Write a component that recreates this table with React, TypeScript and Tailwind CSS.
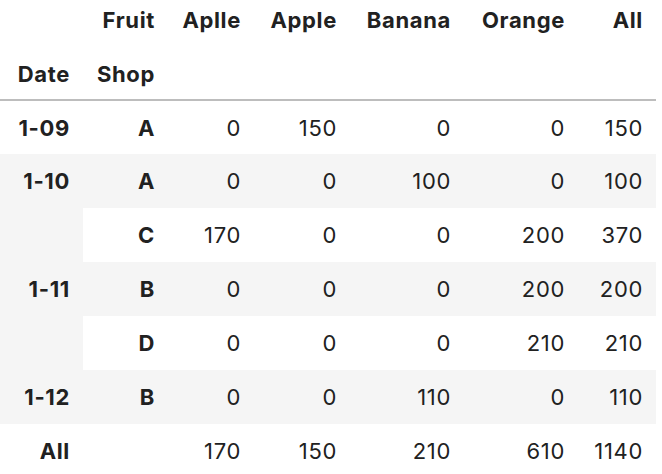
const cols = ["Aplle", "Apple", "Banana", "Orange", "All"];

type Row = { date?: string; span?: number; shop: string; vals: number[]; grey: boolean };

const rows: Row[] = [
  { date: "1-09", shop: "A", vals: [0, 150, 0, 0, 150], grey: false },
  { date: "1-10", shop: "A", vals: [0, 0, 100, 0, 100], grey: true },
  { date: "1-11", span: 3, shop: "C", vals: [170, 0, 0, 200, 370], grey: false },
  { shop: "B", vals: [0, 0, 0, 200, 200], grey: true },
  { shop: "D", vals: [0, 0, 0, 210, 210], grey: false },
  { date: "1-12", shop: "B", vals: [0, 0, 110, 0, 110], grey: true },
  { date: "All", shop: "", vals: [170, 150, 210, 610, 1140], grey: false },
];

const th = "pr-[13px] text-right align-middle font-bold";
const td = "pr-[13px] text-right align-middle font-normal";

export default function App() {
  return (
    <div className="h-[474px] w-[662px] overflow-hidden bg-white font-['Inter',sans-serif] text-[22px] leading-[26px] tracking-[0.03em] text-[#212121]">
      <table className="w-[656px] table-fixed border-collapse">
        <colgroup>
          <col className="w-[83px]" />
          <col className="w-[85px]" />
          <col className="w-[86px]" />
          <col className="w-[96px]" />
          <col className="w-[114px]" />
          <col className="w-[114px]" />
          <col className="w-[78px]" />
        </colgroup>
        <thead>
          <tr className="h-[46px]">
            <th className={`${th} !align-top pt-[7px]`}></th>
            <th className={`${th} !align-top pt-[7px]`}>Fruit</th>
            {cols.map((c) => (
              <th key={c} className={`${th} !align-top pt-[7px]`}>{c}</th>
            ))}
          </tr>
          <tr className="h-[54px] border-b-2 border-[#bdbdbd]">
            <th className={`${th} !align-top pt-[15px]`}>Date</th>
            <th className={`${th} !align-top pt-[15px]`}>Shop</th>
            {cols.map((c) => (
              <th key={c} className={th}></th>
            ))}
          </tr>
        </thead>
        <tbody>
          {rows.map((r, i) => (
            <tr key={i} className={`h-[54px] ${r.grey ? "bg-[#f5f5f5]" : "bg-white"}`}>
              {r.date && (
                <th rowSpan={r.span ?? 1} className={`${th} ${r.span ? "bg-[#f5f5f5]" : ""}`}>
                  {r.date}
                </th>
              )}
              <th className={th}>{r.shop}</th>
              {r.vals.map((v, j) => (
                <td key={j} className={td}>{v}</td>
              ))}
            </tr>
          ))}
        </tbody>
      </table>
    </div>
  );
}
